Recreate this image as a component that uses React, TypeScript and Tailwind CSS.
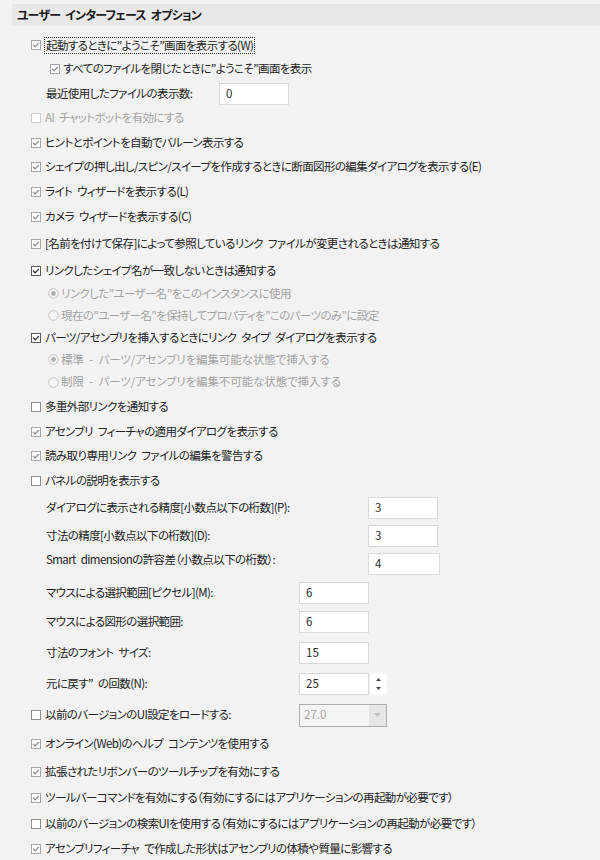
import React from "react";

type Kind = "check" | "radio" | "field" | "combo";

type Row = {
  kind: Kind;
  h: string;
  label: string;
  on?: boolean;
  dim?: boolean;
  dark?: boolean;
  sub?: boolean;
  focus?: boolean;
  wide?: boolean;
  value?: string;
  lw?: string;
  fw?: string;
  spin?: boolean;
  up?: boolean;
};

const rows: Row[] = [
  { kind: "check", h: "h-[24px]", label: "起動するときに”ようこそ”画面を表示する(W)", on: true, focus: true },
  { kind: "check", h: "h-[24px]", label: "すべてのファイルを閉じたときに”ようこそ”画面を表示", on: true, sub: true },
  { kind: "field", h: "h-[25px]", label: "最近使用したファイルの表示数:", value: "0", lw: "w-[173px]" },
  { kind: "check", h: "h-[24px]", label: "AI チャットボットを有効にする", dim: true },
  { kind: "check", h: "h-[25px]", label: "ヒントとポイントを自動でバルーン表示する", on: true },
  { kind: "check", h: "h-[24px]", label: "シェイプの押し出し/スピン/スイープを作成するときに断面図形の編集ダイアログを表示する(E)", on: true },
  { kind: "check", h: "h-[25px]", label: "ライト ウィザードを表示する(L)", on: true },
  { kind: "check", h: "h-[26px]", label: "カメラ ウィザードを表示する(C)", on: true },
  { kind: "check", h: "h-[28px]", label: "[名前を付けて保存]によって参照しているリンク ファイルが変更されるときは通知する", on: true },
  { kind: "check", h: "h-[25px]", label: "リンクしたシェイプ名が一致しないときは通知する", on: true, dark: true },
  { kind: "radio", h: "h-[21px]", label: "リンクした”ユーザー名”をこのインスタンスに使用", on: true },
  { kind: "radio", h: "h-[23px]", label: "現在の”ユーザー名”を保持してプロパティを”このパーツのみ”に設定" },
  { kind: "check", h: "h-[22px]", label: "パーツ/アセンブリを挿入するときにリンク タイプ ダイアログを表示する", on: true, dark: true },
  { kind: "radio", h: "h-[21px]", label: "標準 - パーツ/アセンブリを編集可能な状態で挿入する", on: true, wide: true },
  { kind: "radio", h: "h-[24px]", label: "制限 - パーツ/アセンブリを編集不可能な状態で挿入する", wide: true },
  { kind: "check", h: "h-[25px]", label: "多重外部リンクを通知する" },
  { kind: "check", h: "h-[25px]", label: "アセンブリ フィーチャの適用ダイアログを表示する", on: true },
  { kind: "check", h: "h-[24px]", label: "読み取り専用リンク ファイルの編集を警告する", on: true },
  { kind: "check", h: "h-[26px]", label: "パネルの説明を表示する" },
  { kind: "field", h: "h-[28px]", label: "ダイアログに表示される精度[小数点以下の桁数](P):", value: "3", lw: "w-[322px]" },
  { kind: "field", h: "h-[28px]", label: "寸法の精度[小数点以下の桁数](D):", value: "3", lw: "w-[322px]" },
  { kind: "field", h: "h-[28px]", label: "Smart dimensionの許容差（小数点以下の桁数）:", value: "4", lw: "w-[322px]", fw: "w-[72px]", up: true },
  { kind: "field", h: "h-[29px]", label: "マウスによる選択範囲[ピクセル](M):", value: "6", lw: "w-[253px]" },
  { kind: "field", h: "h-[30px]", label: "マウスによる図形の選択範囲:", value: "6", lw: "w-[253px]" },
  { kind: "field", h: "h-[31px]", label: "寸法のフォント サイズ:", value: "15", lw: "w-[253px]" },
  { kind: "field", h: "h-[32px]", label: "元に戻す” の回数(N):", value: "25", lw: "w-[253px]", spin: true },
  { kind: "combo", h: "h-[30px]", label: "以前のバージョンのUI設定をロードする:", value: "27.0" },
  { kind: "check", h: "h-[28px]", label: "オンライン(Web)のヘルプ コンテンツを使用する", on: true },
  { kind: "check", h: "h-[27px]", label: "拡張されたリボンバーのツールチップを有効にする", on: true },
  { kind: "check", h: "h-[26px]", label: "ツールバーコマンドを有効にする（有効にするにはアプリケーションの再起動が必要です）", on: true },
  { kind: "check", h: "h-[26px]", label: "以前のバージョンの検索UIを使用する（有効にするにはアプリケーションの再起動が必要です）" },
  { kind: "check", h: "h-[24px]", label: "アセンブリフィーチャ で作成した形状はアセンブリの体積や質量に影響する", on: true },
];

function CheckBox({ on, dim, dark }: { on?: boolean; dim?: boolean; dark?: boolean }) {
  const border = dim ? "#cdcdcd" : dark ? "#5c5c5c" : on ? "#a6a6a6" : "#8e8e8e";
  const mark = dark ? "#2e2e2e" : "#8c8c8c";
  return (
    <svg width="10" height="10" viewBox="0 0 10 10" className="shrink-0">
      <rect x="0.5" y="0.5" width="9" height="9" fill="#ffffff" stroke={border} />
      {on && <path d="M2.2 4.8 L4.2 6.9 L7.9 2.9" fill="none" stroke={mark} strokeWidth="1.3" />}
    </svg>
  );
}

function Radio({ on }: { on?: boolean }) {
  return (
    <svg width="11" height="11" viewBox="0 0 11 11" className="shrink-0">
      <circle cx="5.5" cy="5.5" r="4.8" fill="#f6f6f6" stroke="#c3c3c3" />
      {on && <circle cx="5.5" cy="5.5" r="2.4" fill="#b0b0b0" />}
    </svg>
  );
}

function Field({ value, w = "w-[70px]" }: { value: string; w?: string }) {
  return (
    <div className={`flex h-[22px] ${w} shrink-0 items-center border border-[#d9d9d9] bg-white pl-[6px] tracking-normal text-[#2a2a2a]`}>
      {value}
    </div>
  );
}

function Spinner() {
  return (
    <div className="ml-[1px] flex h-[22px] w-[17px] shrink-0 flex-col items-center justify-center gap-[6px] bg-white">
      <svg width="5" height="3" viewBox="0 0 5 3">
        <path d="M2.5 0 L5 3 L0 3 Z" fill="#444" />
      </svg>
      <svg width="5" height="3" viewBox="0 0 5 3">
        <path d="M0 0 L5 0 L2.5 3 Z" fill="#444" />
      </svg>
    </div>
  );
}

function OptionRow({ r }: { r: Row }) {
  if (r.kind === "check") {
    return (
      <div className={`flex ${r.h} items-center ${r.sub ? "pl-[50px]" : "pl-[31px]"}`}>
        <CheckBox on={r.on} dim={r.dim} dark={r.dark} />
        {r.focus ? (
          <span className="ml-[3px] border border-dotted border-[#333] px-[1px] leading-[15px]">{r.label}</span>
        ) : (
          <span className={`${r.sub ? "ml-[3px]" : "ml-[4px]"} ${r.dim ? "text-[#a3a3a3]" : ""}`}>{r.label}</span>
        )}
      </div>
    );
  }
  if (r.kind === "radio") {
    return (
      <div className={`flex ${r.h} items-center pl-[48px]`}>
        <Radio on={r.on} />
        <span className={`ml-[2px] text-[#a3a3a3] ${r.wide ? "tracking-[-0.1px]" : ""}`}>{r.label}</span>
      </div>
    );
  }
  if (r.kind === "field") {
    return (
      <div className={`flex ${r.h} items-center pl-[46px]`}>
        <span className={`${r.lw} shrink-0 ${r.up ? "pb-[8px]" : ""}`}>{r.label}</span>
        <Field value={r.value ?? ""} w={r.fw} />
        {r.spin && <Spinner />}
      </div>
    );
  }
  // combo
  return (
    <div className={`flex ${r.h} items-center pl-[31px]`}>
      <CheckBox />
      <span className="ml-[4px] w-[254px] shrink-0">{r.label}</span>
      <div className="flex h-[23px] w-[88px] shrink-0 items-center border border-[#adadad] bg-[#f4f4f4]">
        <span className="flex-1 pl-[4px] tracking-normal text-[#a8a8a8]">{r.value}</span>
        <div className="flex h-[21px] w-[17px] items-center justify-center bg-[#e6e6e6]">
          <svg width="7" height="4" viewBox="0 0 7 4">
            <path d="M0 0 L7 0 L3.5 4 Z" fill="#c2c2c2" />
          </svg>
        </div>
      </div>
    </div>
  );
}

export default function App() {
  return (
    <div className="h-[860px] w-[600px] overflow-hidden bg-[#f2f2f2] font-['Noto_Sans_CJK_JP',sans-serif] text-[11.5px] tracking-[-0.6px] text-[#222] [font-feature-settings:'palt'] [word-spacing:3px]">
      <div className="ml-[12px] mt-[4px] flex h-[22px] items-center bg-[#e8e8e8] pl-[5px] text-[12px] font-bold tracking-[-0.8px] text-[#1a1a1a]">
        ユーザー インターフェース オプション
      </div>
      <div className="mt-[7px] flex flex-col">
        {rows.map((r, i) => (
          <OptionRow key={i} r={r} />
        ))}
      </div>
    </div>
  );
}
